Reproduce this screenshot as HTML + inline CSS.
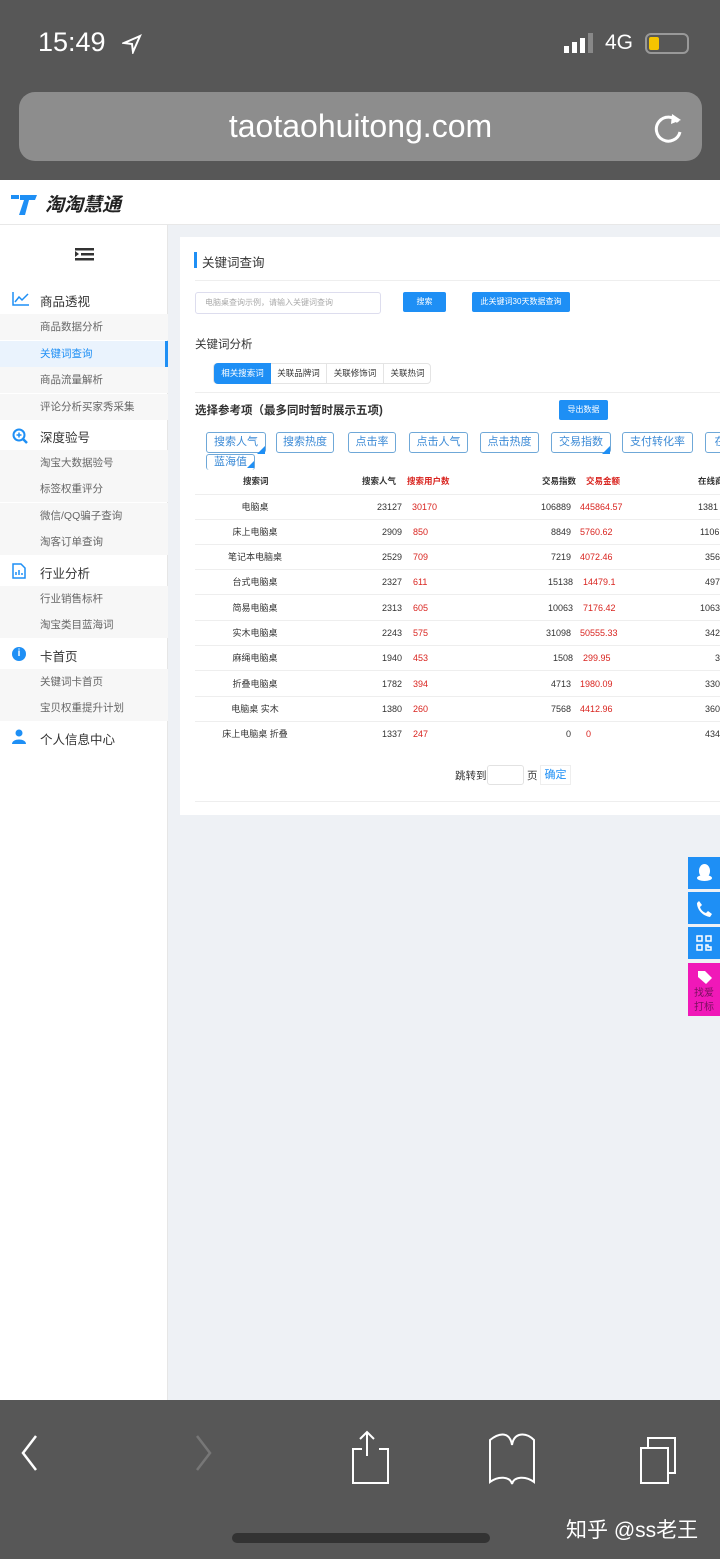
<!DOCTYPE html>
<html><head><meta charset="utf-8"><style>
*{margin:0;padding:0;box-sizing:border-box}
body{width:720px;height:1559px;position:relative;overflow:hidden;background:#eef1f5;font-family:"Liberation Sans","Noto Sans CJK SC",sans-serif;color:#333}
.a{position:absolute;white-space:nowrap}
.top{left:0;top:0;width:720px;height:180px;background:#575757}
.url{left:19px;top:92px;width:683px;height:69px;border-radius:16px;background:#8d8d8d;color:#fff;font-size:32px;text-align:center;line-height:69px}
.hdr{left:0;top:180px;width:720px;height:45px;background:#fff;border-bottom:1px solid #e8e8e8}
.side{left:0;top:225px;width:168px;height:1175px;background:#fff;border-right:1px solid #e6e6e6}
.g{font-size:12.5px;color:#333}
.s{left:0;width:168px;height:26px;background:#f7f7f7;font-size:10.5px;color:#666;padding-left:40px;line-height:26px}
.card{left:180px;top:237px;width:540px;height:578px;background:#fff}
.btn{background:#1e8ff5;color:#fff;font-size:8px;text-align:center;border-radius:2px}
.chip{height:21px;border:1px solid #6fa8d8;border-radius:3px;color:#3b8ad6;font-size:11px;line-height:19px;text-align:center;top:432px}
.row{left:195px;width:525px;height:25px;border-bottom:1.5px solid #eee;font-size:9px;line-height:24px}
.row span{position:absolute;white-space:nowrap}
.r{color:#d9241f}
.bot{left:0;top:1400px;width:720px;height:159px;background:#575757}
.fl{left:688px;width:32px;background:#1e8ff5}
</style></head><body>
<div class="a top"></div>
<div class="a" style="left:38px;top:27px;color:#fff;font-size:27px;">15:49</div>
<svg class="a" style="left:122px;top:34px" width="20" height="20" viewBox="0 0 20 20"><path d="M18 2L2 9l8 1 1 8z" fill="none" stroke="#fff" stroke-width="2"/></svg>
<div class="a" style="left:564px;top:46px;width:5px;height:7px;background:#fff"></div>
<div class="a" style="left:572px;top:42px;width:5px;height:11px;background:#fff"></div>
<div class="a" style="left:580px;top:38px;width:5px;height:15px;background:#fff"></div>
<div class="a" style="left:588px;top:33px;width:5px;height:20px;background:#888"></div>
<div class="a" style="left:605px;top:31px;color:#fff;font-size:21px">4G</div>
<div class="a" style="left:645px;top:33px;width:44px;height:21px;border:2px solid #999;border-radius:6px"></div>
<div class="a" style="left:649px;top:37px;width:10px;height:13px;background:#f4c400;border-radius:2px"></div>
<div class="a url">taotaohuitong.com</div>
<svg class="a" style="left:652px;top:110px" width="34" height="36" viewBox="0 0 34 36"><path d="M26 12A12 12 0 1 0 28 22" fill="none" stroke="#fff" stroke-width="3"/><path d="M20 4l9 6-10 4z" fill="#fff"/></svg>

<div class="a hdr"></div>
<svg class="a" style="left:9px;top:191px" width="30" height="26" viewBox="0 0 30 26"><path d="M2 4h8v4H2zM11 4h17l-2 5h-6l-4 15h-6l5-15h-4z" fill="#1e8ff5"/></svg>
<div class="a" style="left:45px;top:190px;font-size:19px;font-weight:bold;font-style:italic;color:#222">淘淘慧通</div>
<div class="a side"></div>
<svg class="a" style="left:75px;top:247px" width="19" height="15"><rect x="6" y="1" width="13" height="2.5" fill="#333"/><rect x="6" y="6" width="13" height="2.5" fill="#333"/><rect x="0" y="11" width="19" height="2.5" fill="#333"/><rect x="0" y="1" width="19" height="2.5" fill="#333"/><path d="M0 4l4 3-4 3z" fill="#333"/></svg>

<svg class="a" style="left:12px;top:291px" width="18" height="15"><path d="M1 1v13h16" stroke="#1e8ff5" fill="none" stroke-width="1.5"/><path d="M3 11l4-5 3 3 6-6" stroke="#1e8ff5" fill="none" stroke-width="1.5"/></svg>
<div class="a g" style="left:40px;top:291px">商品透视</div>
<div class="a s" style="top:314px">商品数据分析</div>
<div class="a s" style="top:341px;background:#eaf3fd;color:#1e8ff5;border-right:3px solid #1e8ff5">关键词查询</div>
<div class="a s" style="top:367px">商品流量解析</div>
<div class="a s" style="top:394px">评论分析买家秀采集</div>
<svg class="a" style="left:12px;top:428px" width="16" height="16"><circle cx="7" cy="7" r="5.5" stroke="#1e8ff5" stroke-width="2" fill="none"/><path d="M11 11l4 4" stroke="#1e8ff5" stroke-width="2.5"/><path d="M4.5 7h5M7 4.5v5" stroke="#1e8ff5" stroke-width="1.5"/></svg>
<div class="a g" style="left:40px;top:427px">深度验号</div>
<div class="a s" style="top:450px">淘宝大数据验号</div>
<div class="a s" style="top:476px">标签权重评分</div>
<div class="a s" style="top:503px">微信/QQ骗子查询</div>
<div class="a s" style="top:529px">淘客订单查询</div>
<svg class="a" style="left:12px;top:563px" width="14" height="16"><path d="M1 1h8l4 4v10H1z" fill="none" stroke="#1e8ff5" stroke-width="1.5"/><path d="M4 12v-3M7 12v-5M10 12v-2" stroke="#1e8ff5" stroke-width="1.5"/></svg>
<div class="a g" style="left:40px;top:563px">行业分析</div>
<div class="a s" style="top:586px">行业销售标杆</div>
<div class="a s" style="top:612px">淘宝类目蓝海词</div>
<div class="a" style="left:12px;top:647px;width:14px;height:14px;border-radius:50%;background:#1e8ff5;color:#fff;font-size:10px;text-align:center;line-height:14px;font-weight:bold">i</div>
<div class="a g" style="left:40px;top:646px">卡首页</div>
<div class="a s" style="top:669px">关键词卡首页</div>
<div class="a s" style="top:695px">宝贝权重提升计划</div>
<svg class="a" style="left:12px;top:729px" width="14" height="15"><circle cx="7" cy="4" r="3.5" fill="#1e8ff5"/><path d="M0 15c0-6 14-6 14 0z" fill="#1e8ff5"/></svg>
<div class="a g" style="left:40px;top:729px">个人信息中心</div>

<div class="a card"></div>
<div class="a" style="left:194px;top:252px;width:3px;height:16px;background:#1e8ff5"></div>
<div class="a" style="left:202px;top:252px;font-size:12.5px">关键词查询</div>
<div class="a" style="left:195px;top:280px;width:525px;border-top:1px solid #eee"></div>
<div class="a" style="left:195px;top:292px;width:186px;height:22px;border:1px solid #dde;border-radius:3px;font-size:8px;color:#aaa;padding-left:9px;line-height:20px">电脑桌查询示例，请输入关键词查询</div>
<div class="a btn" style="left:403px;top:292px;width:43px;height:20px;line-height:20px">搜索</div>
<div class="a btn" style="left:472px;top:292px;width:98px;height:20px;line-height:20px">此关键词30天数据查询</div>
<div class="a" style="left:195px;top:336px;font-size:11.5px">关键词分析</div>
<div class="a" style="left:213px;top:363px;width:218px;height:21px;border:1px solid #e4e4e4;border-radius:4px;font-size:8.5px;line-height:19px">
<span class="a" style="left:0;top:-1px;width:57px;height:21px;background:#1e8ff5;color:#fff;border-radius:4px 0 0 4px;text-align:center;line-height:21px">相关搜索词</span>
<span class="a" style="left:57px;width:56px;text-align:center;border-right:1px solid #e4e4e4">关联品牌词</span>
<span class="a" style="left:113px;width:57px;text-align:center;border-right:1px solid #e4e4e4">关联修饰词</span>
<span class="a" style="left:170px;width:47px;text-align:center">关联热词</span></div>
<div class="a" style="left:195px;top:392px;width:525px;border-top:1px solid #eee"></div>
<div class="a" style="left:195px;top:402px;font-size:11.5px;font-weight:bold">选择参考项（最多同时暂时展示五项)</div>
<div class="a btn" style="left:559px;top:400px;width:49px;height:20px;line-height:20px">导出数据</div>
<div class="a chip" style="left:206px;width:60px">搜索人气</div>
<div class="a chip" style="left:276px;width:58px">搜索热度</div>
<div class="a chip" style="left:348px;width:48px">点击率</div>
<div class="a chip" style="left:409px;width:59px">点击人气</div>
<div class="a chip" style="left:480px;width:59px">点击热度</div>
<div class="a chip" style="left:551px;width:60px">交易指数</div>
<div class="a chip" style="left:622px;width:71px">支付转化率</div>
<div class="a chip" style="left:705px;width:30px">在</div>
<div class="a chip" style="left:206px;top:454px;width:49px;height:16px;line-height:15px;border-bottom:none">蓝海值</div>
<div class="a" style="left:257px;top:446px;border-left:8px solid transparent;border-bottom:8px solid #1e8ff5"></div>
<div class="a" style="left:602px;top:446px;border-left:8px solid transparent;border-bottom:8px solid #1e8ff5"></div>
<div class="a" style="left:247px;top:461px;border-left:7px solid transparent;border-bottom:7px solid #1e8ff5"></div>

<div class="a" style="left:195px;top:471px;width:525px;height:24px;font-size:8.5px;font-weight:bold;line-height:20px;border-bottom:1.5px solid #eee">
<span class="a" style="left:48px">搜索词</span><span class="a" style="left:167px">搜索人气</span><span class="a r" style="left:212px">搜索用户数</span><span class="a" style="left:347px">交易指数</span><span class="a r" style="left:391px">交易金额</span><span class="a" style="left:503px">在线商</span></div>

<div class="a row" style="top:495px"><span style="left:0;width:120px;text-align:center">电脑桌</span><span style="right:318px">23127</span><span class="r" style="left:217px">30170</span><span style="right:149px">106889</span><span class="r" style="left:385px">445864.57</span><span style="left:503px">1381</span></div>
<div class="a row" style="top:520px"><span style="left:0;width:120px;text-align:center">床上电脑桌</span><span style="right:318px">2909</span><span class="r" style="left:218px">850</span><span style="right:149px">8849</span><span class="r" style="left:385px">5760.62</span><span style="left:505px">1106</span></div>
<div class="a row" style="top:545px"><span style="left:0;width:120px;text-align:center">笔记本电脑桌</span><span style="right:318px">2529</span><span class="r" style="left:218px">709</span><span style="right:149px">7219</span><span class="r" style="left:385px">4072.46</span><span style="left:510px">356</span></div>
<div class="a row" style="top:570px"><span style="left:0;width:120px;text-align:center">台式电脑桌</span><span style="right:318px">2327</span><span class="r" style="left:218px">611</span><span style="right:147px">15138</span><span class="r" style="left:388px">14479.1</span><span style="left:510px">497</span></div>
<div class="a row" style="top:596px"><span style="left:0;width:120px;text-align:center">简易电脑桌</span><span style="right:318px">2313</span><span class="r" style="left:218px">605</span><span style="right:147px">10063</span><span class="r" style="left:388px">7176.42</span><span style="left:505px">1063</span></div>
<div class="a row" style="top:621px"><span style="left:0;width:120px;text-align:center">实木电脑桌</span><span style="right:318px">2243</span><span class="r" style="left:218px">575</span><span style="right:149px">31098</span><span class="r" style="left:385px">50555.33</span><span style="left:510px">342</span></div>
<div class="a row" style="top:646px"><span style="left:0;width:120px;text-align:center">麻绳电脑桌</span><span style="right:318px">1940</span><span class="r" style="left:218px">453</span><span style="right:147px">1508</span><span class="r" style="left:388px">299.95</span><span style="left:520px">3</span></div>
<div class="a row" style="top:672px"><span style="left:0;width:120px;text-align:center">折叠电脑桌</span><span style="right:318px">1782</span><span class="r" style="left:218px">394</span><span style="right:149px">4713</span><span class="r" style="left:385px">1980.09</span><span style="left:510px">330</span></div>
<div class="a row" style="top:697px"><span style="left:0;width:120px;text-align:center">电脑桌 实木</span><span style="right:318px">1380</span><span class="r" style="left:218px">260</span><span style="right:149px">7568</span><span class="r" style="left:385px">4412.96</span><span style="left:510px">360</span></div>
<div class="a row" style="top:722px;border-bottom:none"><span style="left:0;width:120px;text-align:center">床上电脑桌 折叠</span><span style="right:318px">1337</span><span class="r" style="left:218px">247</span><span style="right:149px">0</span><span class="r" style="left:391px">0</span><span style="left:510px">434</span></div>
<div class="a" style="left:455px;top:768px;font-size:10.5px">跳转到</div>
<div class="a" style="left:487px;top:765px;width:37px;height:20px;border:1px solid #e2e2e2;border-radius:3px"></div>
<div class="a" style="left:527px;top:768px;font-size:10.5px">页</div>
<div class="a" style="left:540px;top:765px;width:31px;height:20px;border:1px solid #eee;color:#1e8ff5;font-size:11px;line-height:18px;text-align:center">确定</div>
<div class="a" style="left:195px;top:801px;width:525px;border-top:1px solid #eee"></div>

<div class="a fl" style="top:857px;height:32px"></div>
<svg class="a" style="left:696px;top:863px" width="17" height="19"><ellipse cx="8.5" cy="8" rx="5.5" ry="7" fill="#fff"/><ellipse cx="8.5" cy="15" rx="7.5" ry="3" fill="#fff"/></svg>
<div class="a fl" style="top:892px;height:32px"></div>
<svg class="a" style="left:696px;top:900px" width="16" height="17"><path d="M3 1l3 4-2 2c1 3 3 5 6 6l2-2 4 3-2 3C7 16 1 10 1 3z" fill="#fff"/></svg>
<div class="a fl" style="top:927px;height:32px"></div>
<svg class="a" style="left:696px;top:935px" width="16" height="16" fill="none" stroke="#fff" stroke-width="1.5"><rect x="1" y="1" width="5" height="5"/><rect x="10" y="1" width="5" height="5"/><rect x="1" y="10" width="5" height="5"/><path d="M10 10h2v2h3v3h-5z"/></svg>
<div class="a fl" style="top:963px;height:53px;background:#f018b8"></div>
<svg class="a" style="left:697px;top:970px" width="16" height="14"><path d="M1 1h7l7 7-6 6-8-7z" fill="#fff"/></svg>
<div class="a" style="left:694px;top:987px;width:24px;font-size:10px;color:#7a1060;line-height:14px;white-space:normal">找爱<br>打标</div>

<div class="a bot"></div>
<svg class="a" style="left:20px;top:1430px" width="680" height="60" fill="none" stroke-width="2.5">
<path d="M16 6L3 23l13 17" stroke="#fff"/>
<path d="M177 6l13 17-13 17" stroke="#777"/>
<path d="M340 9l7-7 7 7M347 2v24" stroke="#fff" stroke-width="2"/><path d="M342 19h-9v34h35V19h-9" stroke="#fff" stroke-width="2"/>
<path d="M470 52V10c10-8 20-8 22 5c2-13 14-13 22-5v42c-8-6-20-6-22 2c-2-8-14-8-22-2z" stroke="#fff" stroke-width="2"/>
<rect x="621" y="18" width="27" height="35" stroke="#fff" stroke-width="2"/><path d="M628 18V8h27v35h-7" stroke="#fff" stroke-width="2"/>
</svg>
<div class="a" style="left:232px;top:1533px;width:258px;height:10px;border-radius:5px;background:#333"></div>
<div class="a" style="left:566px;top:1514px;color:#fff;font-size:21px">知乎 @ss老王</div>
</body></html>
